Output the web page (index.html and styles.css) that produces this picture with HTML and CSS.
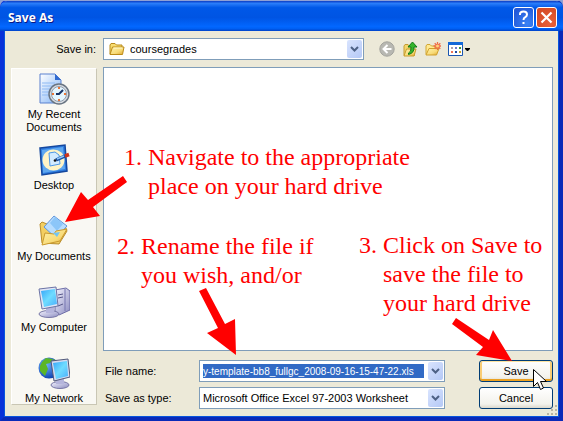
FILE: index.html
```html
<!DOCTYPE html>
<html lang="en">
<head>
<meta charset="utf-8">
<title>Save As</title>
<link rel="stylesheet" href="styles.css">
</head>
<body>
<svg class="defs" width="0" height="0" aria-hidden="true">
  <defs>
    <linearGradient id="gold" x1="0" y1="0" x2="1" y2="1"><stop offset="0" stop-color="#fff3ae"/><stop offset=".6" stop-color="#f8db78"/><stop offset="1" stop-color="#dda32c"/></linearGradient>
    <linearGradient id="screen" x1="0" y1="0" x2="1" y2="1"><stop offset="0" stop-color="#36a5f8"/><stop offset=".5" stop-color="#6fdcff"/><stop offset="1" stop-color="#49aefb"/></linearGradient>
    <linearGradient id="metal" x1="0" y1="0" x2="1" y2="1"><stop offset="0" stop-color="#f4f4ff"/><stop offset="1" stop-color="#8c8cc0"/></linearGradient>
    <linearGradient id="paper" x1="0" y1="0" x2="1" y2="1"><stop offset="0" stop-color="#ffffff"/><stop offset="1" stop-color="#7fb2f5"/></linearGradient>
    <radialGradient id="globe" cx=".35" cy=".35" r=".7"><stop offset="0" stop-color="#6fb6ff"/><stop offset="1" stop-color="#0c3fae"/></radialGradient>
  </defs>
</svg>
<main class="window">
  <header class="titlebar">
    <h1>Save As</h1>
    <button class="caption help" aria-label="Help"><svg width="21" height="21" viewBox="0 0 21 21"><path d="M7 8V7q0-2.500 3.500-2.500T14 7.500q0 1.500-1.700 2.600-1.800 1-1.800 2.900M10.500 15v2" fill="none" stroke="#fff" stroke-width="2"/></svg></button>
    <button class="caption close" aria-label="Close"><svg width="21" height="21" viewBox="0 0 21 21"><path d="M5.500 5.500l10 10m0-10l-10 10" stroke="#fff" stroke-width="2.200"/></svg></button>
  </header>
  <form class="content" onsubmit="return false">
    <div class="lookin">
      <label for="folder">Save in:</label>
      <div class="combo">
        <svg class="folder" width="16" height="16" viewBox="0 0 16 16"><path d="M1 13V4l1-1.500h4L7.500 4H13v2" fill="#f7dc70" stroke="#b98a1c"/><path d="M1 13.500L3.500 6H15l-1.500 7.500z" fill="url(#gold)" stroke="#bd8b17"/><path d="M4.500 7h9" stroke="#fffbd0"/></svg>
        <select id="folder"><option>coursegrades</option></select>
        <span class="drop"><svg width="9" height="7" viewBox="0 0 9 7"><path d="M1 1l3.500 3.500L8 1" fill="none" stroke="#4d6185" stroke-width="2"/></svg></span>
      </div>
      <div class="tools">
        <button aria-label="Back"><svg width="16" height="16" viewBox="0 0 16 16"><circle cx="8" cy="8" r="7.200" fill="#b8b8b2" stroke="#a3a39d"/><path d="M12.500 8H5M8.500 4L4.500 8l4 4" fill="none" stroke="#fff" stroke-width="2"/></svg></button>
        <button aria-label="Up one level"><svg width="16" height="16" viewBox="0 0 16 16"><path d="M2 14.500V5l1-1.500h3L7 5h4l1.500 9.500z" fill="#f5d66c" stroke="#c39c34"/><path d="M2 15l2.500-7H14l-2 7z" fill="url(#gold)" stroke="#c99e2f"/><path d="M6.500 12q3-1 2.500-6H6l4.500-5L15 6h-3q.5 6-5.500 7.500z" fill="#35b52c" stroke="#137a17"/></svg></button>
        <button aria-label="New folder"><svg width="16" height="16" viewBox="0 0 16 16"><path d="M1 13.500V5l1-1.500h3L6.500 5H10v3" fill="#ffe991" stroke="#d1a735"/><path d="M1 14l3-6.500h10L11.500 14z" fill="url(#gold)" stroke="#d0a12c"/><path d="M12.500 1v8M8.500 5h8M9.700 2.200l5.600 5.600m0-5.600L9.700 7.800" stroke="#ef6a48" stroke-width="1.300"/><circle cx="12.500" cy="5" r="1.500" fill="#ffd47a"/></svg></button>
        <button class="views" aria-label="Views"><svg width="23" height="16" viewBox="0 0 23 16"><path d="M.5 1.500h14v13H.5z" fill="#fff" stroke="#1a56b0"/><path d="M0 1h15v3H0z" fill="#1268d8"/><path d="M3 6h2v2H3z" fill="#aaa2ad"/><path d="M7 6h2v2H7z" fill="#697bd0"/><path d="M11 6h2v2h-2z" fill="#36933b"/><path d="M3 10h2v2H3z" fill="#f07355"/><path d="M7 10h2v2H7z" fill="#1e4aa0"/><path d="M11 10h2v2h-2z" fill="#c6a127"/><path d="M17 7h5v1l-2 2h-1l-2-2z" fill="#000"/></svg></button>
      </div>
    </div>
    <div class="body">
      <nav class="places">
        <a href="#recent"><svg width="32" height="32" viewBox="0 0 32 32"><path d="M2 1h15l6 6v23H2z" fill="url(#paper)" stroke="#5b81cf"/><path d="M17 1v6h6z" fill="#316bd0"/><path d="M4 10h13M4 13h11M4 16h9M4 19h8M4 22h8" stroke="#8fbaf3"/><circle cx="21" cy="21" r="10" fill="#d8dce2" stroke="#697582" stroke-width="1.500"/><circle cx="21" cy="21" r="7.500" fill="#e4f6ff" stroke="#909dac"/><path d="M21 14v2m0 10v2m-7-7h2m10 0h2" stroke="#ec7635" stroke-width="2"/><path d="M25 17l-4 4h-3" fill="none" stroke="#153366" stroke-width="2"/></svg><span>My Recent Documents</span></a>
        <a href="#desktop"><svg width="32" height="32" viewBox="0 0 32 32"><path d="M2 4l25-3 2 26-25 4z" fill="#2f7de0" stroke="#15489e" stroke-width="1.500"/><path d="M4 6l21-3 2 22-22 4z" fill="#5fa8f0"/><ellipse cx="15.500" cy="16" rx="11" ry="10.500" fill="#fff4c6"/><path d="M11 9l6-1 4 3 1 9-10 2z" fill="#d2ebff" stroke="#4c98e8"/><path d="M18 16l9-4" stroke="#164da0" stroke-width="3.500"/><path d="M19 15l7-3" stroke="#8fc6f8" stroke-width="1.500"/><path d="M27 12l4-1.500" stroke="#cf3419" stroke-width="3.500"/><circle cx="17" cy="16.500" r="1.300" fill="#111"/></svg><span>Desktop</span></a>
        <a href="#documents"><svg width="32" height="32" viewBox="0 0 32 32"><path d="M4 28L2 9l2-2 5 2 2 3 16-1 2 5-8 13z" fill="#f3cf62" stroke="#b98d2c"/><path d="M6 12L16 1l13 10-11 12z" fill="#b8ddff" stroke="#6096dc"/><path d="M12 8l5-6 8 7-6 7z" fill="#8cc6f9"/><path d="M4 30l3-12 9 1 2-3 11-2-7 12z" fill="url(#gold)" stroke="#c9992e"/><path d="M15 18l7-1-3 5z" fill="#72c4f3"/></svg><span>My Documents</span></a>
        <a href="#computer"><svg width="32" height="32" viewBox="0 0 32 32"><path d="M17 4l11-2 4 3v19l-11 5-4-4z" fill="url(#metal)" stroke="#6d6da7"/><path d="M27 3v22" stroke="#7777b1"/><path d="M20 9l5-1m-5 4l5-1m-5 9l5-2" stroke="#58588a"/><ellipse cx="11" cy="28" rx="10" ry="3.500" fill="url(#metal)" stroke="#7777a6"/><path d="M8 20h8v7H8z" fill="#b5b5dc"/><path d="M1 3l17-2 2 19-16 3z" fill="#e1e5f6" stroke="#6c74a5"/><path d="M3 5l14-2 2 15-13 3z" fill="url(#screen)"/></svg><span>My Computer</span></a>
        <a href="#network"><svg width="32" height="32" viewBox="0 0 32 32"><circle cx="11" cy="11" r="10.500" fill="url(#globe)"/><path d="M4 5l4-4 7 1-3 4-4 1 2 5-3 7-5-5V9zM16 2l4 4-3 3-3-4z" fill="#5cb626"/><ellipse cx="22" cy="28" rx="9" ry="3.500" fill="url(#metal)" stroke="#7777a6"/><path d="M18 20h8v7h-8z" fill="#b5b5dc"/><path d="M13 4l17-2 2 18-16 4z" fill="#d4daf0" stroke="#515979"/><path d="M15 6l14-2 1 15-12 3z" fill="url(#screen)"/></svg><span>My Network</span></a>
      </nav>
      <div class="main">
        <div class="files"></div>
        <div class="fields">
          <label for="name">File name:</label>
          <div class="combo"><input id="name" value="y-template-bb8_fullgc_2008-09-16-15-47-22.xls"><span class="drop"><svg width="9" height="7" viewBox="0 0 9 7"><path d="M1 1l3.500 3.500L8 1" fill="none" stroke="#4d6185" stroke-width="2"/></svg></span></div>
          <button class="push default" type="submit">Save</button>
          <label for="type">Save as type:</label>
          <div class="combo"><select id="type"><option>Microsoft Office Excel 97-2003 Worksheet</option></select><span class="drop"><svg width="9" height="7" viewBox="0 0 9 7"><path d="M1 1l3.500 3.500L8 1" fill="none" stroke="#4d6185" stroke-width="2"/></svg></span></div>
          <button class="push" type="button">Cancel</button>
        </div>
      </div>
    </div>
    <svg class="grip" width="12" height="12" viewBox="0 0 12 12"><path d="M9 1h2v2H9zM5 5h2v2H5zM9 5h2v2H9zM1 9h2v2H1zM5 9h2v2H5zM9 9h2v2H9z" fill="#b8b4a2"/></svg>
  </form>
  <p class="note navigate">1. Navigate to the appropriate<br>place on your hard drive</p>
  <p class="note rename">2. Rename the file if<br>you wish, and/or</p>
  <p class="note save">3. Click on Save to<br>save the file to<br>your hard drive</p>
  <svg class="arrows" width="563" height="421" viewBox="0 0 563 421" aria-hidden="true">
    <path d="M123 176l4 6-34 25 7 9-35 6 16-30 7 8z" fill="red"/>
    <path d="M199 291l7-3 19 36 10-5 1 36-29-22 11-5z" fill="red"/>
    <path d="M452 324l4-6 33 22 4-10 19 31-36-6 7-8z" fill="red"/>
    <path d="M533.500 369.500v17l4-4 3 7 3-1.500-3-6.500h6z" fill="#fff" stroke="#000"/>
  </svg>
</main>
</body>
</html>
```
FILE: styles.css
```css
* { box-sizing: border-box; }
body {
  margin: 0;
  background: #8fa0d4;
  color: #000;
  font: 11px/13px "Liberation Sans", Arial, sans-serif;
}
button, input, select { font: inherit; color: inherit; }
svg { display: block; flex: none; }
.defs { position: absolute; }

.window {
  position: relative;
  display: flex;
  flex-direction: column;
  min-height: 100vh;
  border: solid #0831d9;
  border-width: 0 4px 4px;
  border-color: #0831d9 #0a2ab8 #0a2ab8 #0831d9;
  border-top: 1px solid #8fa0d4;
  border-radius: 7px 7px 0 0;
  background: #ece9d8;
}
.titlebar {
  display: flex;
  align-items: center;
  gap: 2px;
  height: 30px;
  margin: 0 -4px;
  padding: 2px 6px 0 8px;
  border-radius: 7px 7px 0 0;
  background: linear-gradient(#0a3bc4, #2a7dfa 8%, #0058e8 22%, #0054e3 55%, #0267ff 85%, #0060f4 92%, #0042c8);
}
.titlebar h1 {
  flex: 1;
  margin: 0;
  padding-top: 2px;
  color: #fff;
  font: bold 12px/16px "Open Sans", sans-serif;
  text-shadow: 1px 1px #0a1883;
}
.caption {
  width: 21px;
  height: 21px;
  padding: 0;
  border: 1px solid #fff;
  border-radius: 3px;
}
.caption svg { margin: -1px; }
.help { background: radial-gradient(circle at 70% 80%, #3a83f5, #2258d8 80%); }
.close { background: radial-gradient(circle at 70% 80%, #e8613a, #d54b26 80%); }

.content {
  position: relative;
  flex: 1;
  display: flex;
  flex-direction: column;
  gap: 7px;
  padding: 7px 6px 12px 7px;
  box-shadow: inset 1px 0 #0855dd, inset -1px 0 #0855dd, inset 0 -1px #0855dd;
}
.lookin {
  display: grid;
  grid-template-columns: 85px minmax(100px, 261px) auto;
  align-items: center;
  column-gap: 7px;
}
.lookin label { text-align: right; }
.combo {
  display: flex;
  align-items: center;
  height: 22px;
  padding: 0 1px 0 3px;
  border: 1px solid #7f9db9;
  background: #fff;
}
.combo select, .combo input {
  flex: 1;
  min-width: 0;
  height: 14px;
  padding: 0;
  border: 0;
  outline: 0;
  appearance: none;
  background: transparent;
}
.combo input { background: #316ac5; color: #fff; font-size: 10px; }
.combo .folder { margin: 0 5px 0 2px; }
.drop {
  display: grid;
  place-items: center;
  width: 15px;
  height: 18px;
  margin-left: 4px;
  border-radius: 2px;
  background: linear-gradient(135deg, #d9e4fe, #b4c8f6);
}
.tools { display: flex; gap: 7px; margin-left: 8px; }
.tools button { padding: 0; border: 0; background: none; }

.body { flex: 1; display: flex; gap: 6px; }
.places {
  display: flex;
  flex-direction: column;
  width: 86px;
  margin-top: 1px;
  border: 1px solid #fff;
  border-right-color: #c9c6b4;
  border-bottom-color: #c9c6b4;
  background: #f9f8f3;
}
.places a {
  display: flex;
  flex-direction: column;
  align-items: center;
  gap: 3px;
  height: 71px;
  padding: 4px 8px 0;
  color: inherit;
  text-align: center;
  text-decoration: none;
}
.places a:last-child { height: 50px; }
.places a + a { padding: 4px 0 0; }
.main { flex: 1; display: flex; flex-direction: column; gap: 9px; }
.files { flex: 1; border: 1px solid #7f9db9; background: #fff; }
.fields {
  display: grid;
  grid-template-columns: 94px minmax(0, 246px) 1fr;
  align-items: center;
  gap: 5px 0;
  padding-left: 2px;
  margin-bottom: -4px;
}
.push {
  justify-self: end;
  width: 74px;
  height: 22px;
  padding: 0;
  border: 1px solid #003c74;
  border-radius: 3px;
  background: linear-gradient(#fff, #f3f2ec 80%, #dcd8cc);
}
.default { box-shadow: inset 0 1px #fde3a0, inset 0 -2px #eba121, inset 2px 0 #f9cd75, inset -2px 0 #f9cd75; }
.grip { position: absolute; right: 1px; bottom: 1px; }

.note {
  position: absolute;
  margin: 0;
  padding-left: 24px;
  color: red;
  font: 24px/29px "Liberation Serif", "Times New Roman", serif;
  text-indent: -24px;
  white-space: nowrap;
}
.navigate { left: 120px; top: 142px; }
.rename { left: 113px; top: 231px; }
.save { left: 355px; top: 230px; }
.arrows { position: absolute; left: -4px; top: -1px; pointer-events: none; }
```
